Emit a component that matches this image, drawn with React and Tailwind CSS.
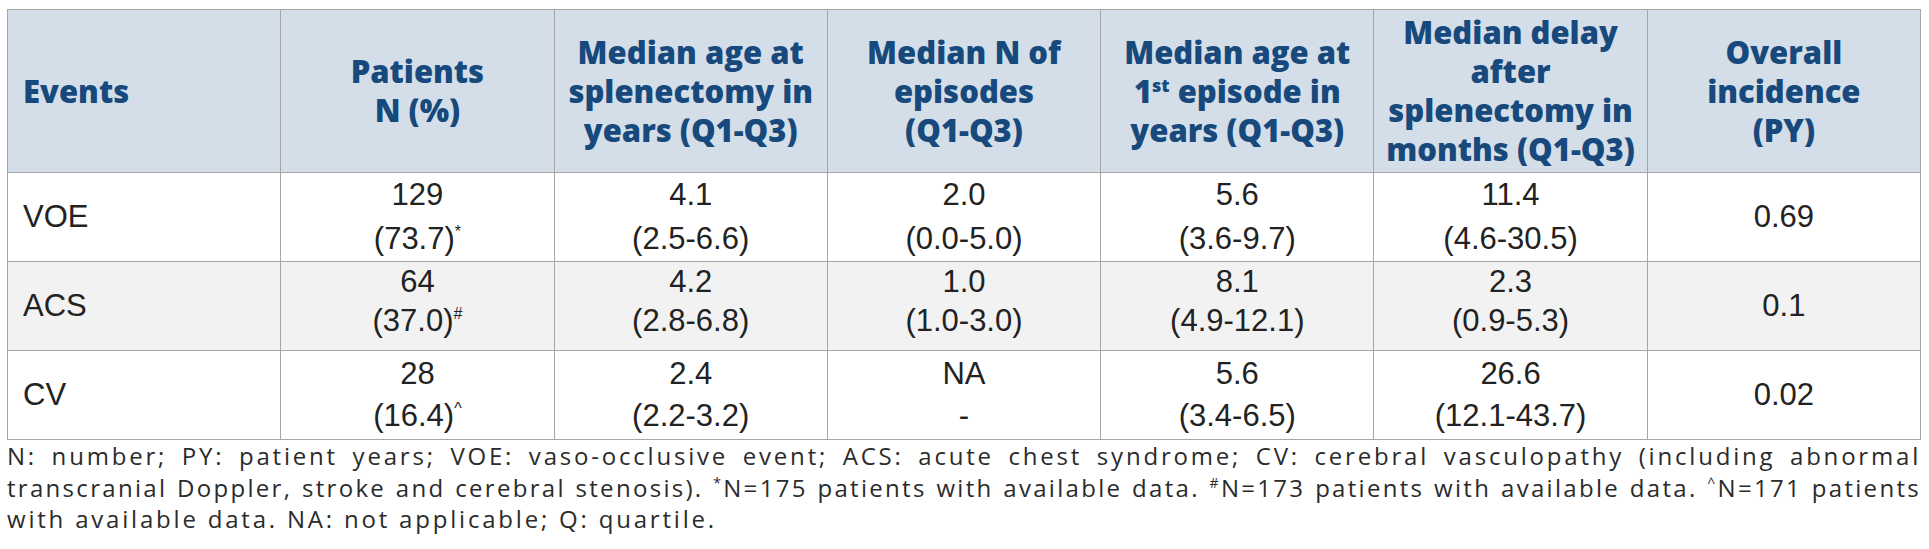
import React from "react";

const headFont = { fontFamily: '"Open Sans", "Noto Sans", sans-serif' };

function Sup({ children }) {
  return <span className="text-[16px] align-[12px] leading-none">{children}</span>;
}

function FSup({ children }) {
  return <span className="text-[14px] align-[9px] leading-none">{children}</span>;
}

const headers = [
  ["Events"],
  ["Patients", "N (%)"],
  ["Median age at", "splenectomy in", "years (Q1-Q3)"],
  ["Median N of", "episodes", "(Q1-Q3)"],
  ["Median age at", <>1<span className="text-[18px] align-[11px] leading-none">st</span> episode in</>, "years (Q1-Q3)"],
  ["Median delay", "after", "splenectomy in", "months (Q1-Q3)"],
  ["Overall", "incidence", "(PY)"],
];

const rows = [
  {
    label: "VOE",
    bg: "bg-white",
    h: "h-[89px]",
    lh: "leading-[44px]",
    cells: [
      ["129", <>(73.7)<Sup>*</Sup></>],
      ["4.1", "(2.5-6.6)"],
      ["2.0", "(0.0-5.0)"],
      ["5.6", "(3.6-9.7)"],
      ["11.4", "(4.6-30.5)"],
      ["0.69"],
    ],
  },
  {
    label: "ACS",
    bg: "bg-[#f2f2f2]",
    h: "h-[88px]",
    lh: "leading-[39px] pb-[10px]",
    cells: [
      ["64", <>(37.0)<Sup>#</Sup></>],
      ["4.2", "(2.8-6.8)"],
      ["1.0", "(1.0-3.0)"],
      ["8.1", "(4.9-12.1)"],
      ["2.3", "(0.9-5.3)"],
      ["0.1"],
    ],
  },
  {
    label: "CV",
    bg: "bg-white",
    h: "h-[89px]",
    lh: "leading-[42px]",
    cells: [
      ["28", <>(16.4)<Sup>^</Sup></>],
      ["2.4", "(2.2-3.2)"],
      ["NA", "-"],
      ["5.6", "(3.4-6.5)"],
      ["26.6", "(12.1-43.7)"],
      ["0.02"],
    ],
  },
];

export default function App() {
  return (
    <div className="w-[1929px] h-[549px] bg-white pl-[7px] pt-[9px] overflow-hidden">
      <table className="border-collapse table-fixed w-[1914px]">
        <thead>
          <tr className="h-[163px] bg-[#d3dee8]">
            {headers.map((lines, i) => (
              <th
                key={i}
                style={headFont}
                className={`border border-[#a6a6a6] font-extrabold text-[31px] leading-[39px] text-[#17497c] align-middle p-0 ${
                  i === 0 ? "text-left pl-[15px]" : "text-center"
                }`}
              >
                {lines.map((l, j) => (
                  <div key={j} className="whitespace-nowrap">
                    {l}
                  </div>
                ))}
              </th>
            ))}
          </tr>
        </thead>
        <tbody>
          {rows.map((r, ri) => (
            <tr key={ri} className={`${r.bg} ${r.h}`}>
              <td className="border border-[#a6a6a6] p-0 pl-[15px] text-left align-middle font-['Liberation_Sans',Arial,sans-serif] text-[31px] leading-[40px] text-[#222]">
                {r.label}
              </td>
              {r.cells.map((c, ci) => (
                <td
                  key={ci}
                  className={`border border-[#a6a6a6] p-0 text-center align-middle font-['Liberation_Sans',Arial,sans-serif] text-[31px] text-[#222] ${
                    c.length > 1 ? r.lh : "leading-[40px]"
                  }`}
                >
                  {c.map((l, j) => (
                    <div key={j} className="whitespace-nowrap">
                      {l}
                    </div>
                  ))}
                </td>
              ))}
            </tr>
          ))}
        </tbody>
      </table>
      <div className="w-[1914px] font-['Open_Sans',sans-serif] text-[24px] leading-[31.5px] text-[#2b2b2b]">
        <div className="whitespace-nowrap tracking-[2.8px] [text-align-last:justify] text-justify">
          N: number; PY: patient years; VOE: vaso-occlusive event; ACS: acute chest syndrome; CV: cerebral vasculopathy (including abnormal
        </div>
        <div className="whitespace-nowrap tracking-[2.3px] [text-align-last:justify] text-justify">
          transcranial Doppler, stroke and cerebral stenosis). <FSup>*</FSup>N=175 patients with available data. <FSup>#</FSup>N=173 patients with available data. <FSup>^</FSup>N=171 patients
        </div>
        <div className="whitespace-nowrap tracking-[2.8px]">with available data. NA: not applicable; Q: quartile.</div>
      </div>
    </div>
  );
}
